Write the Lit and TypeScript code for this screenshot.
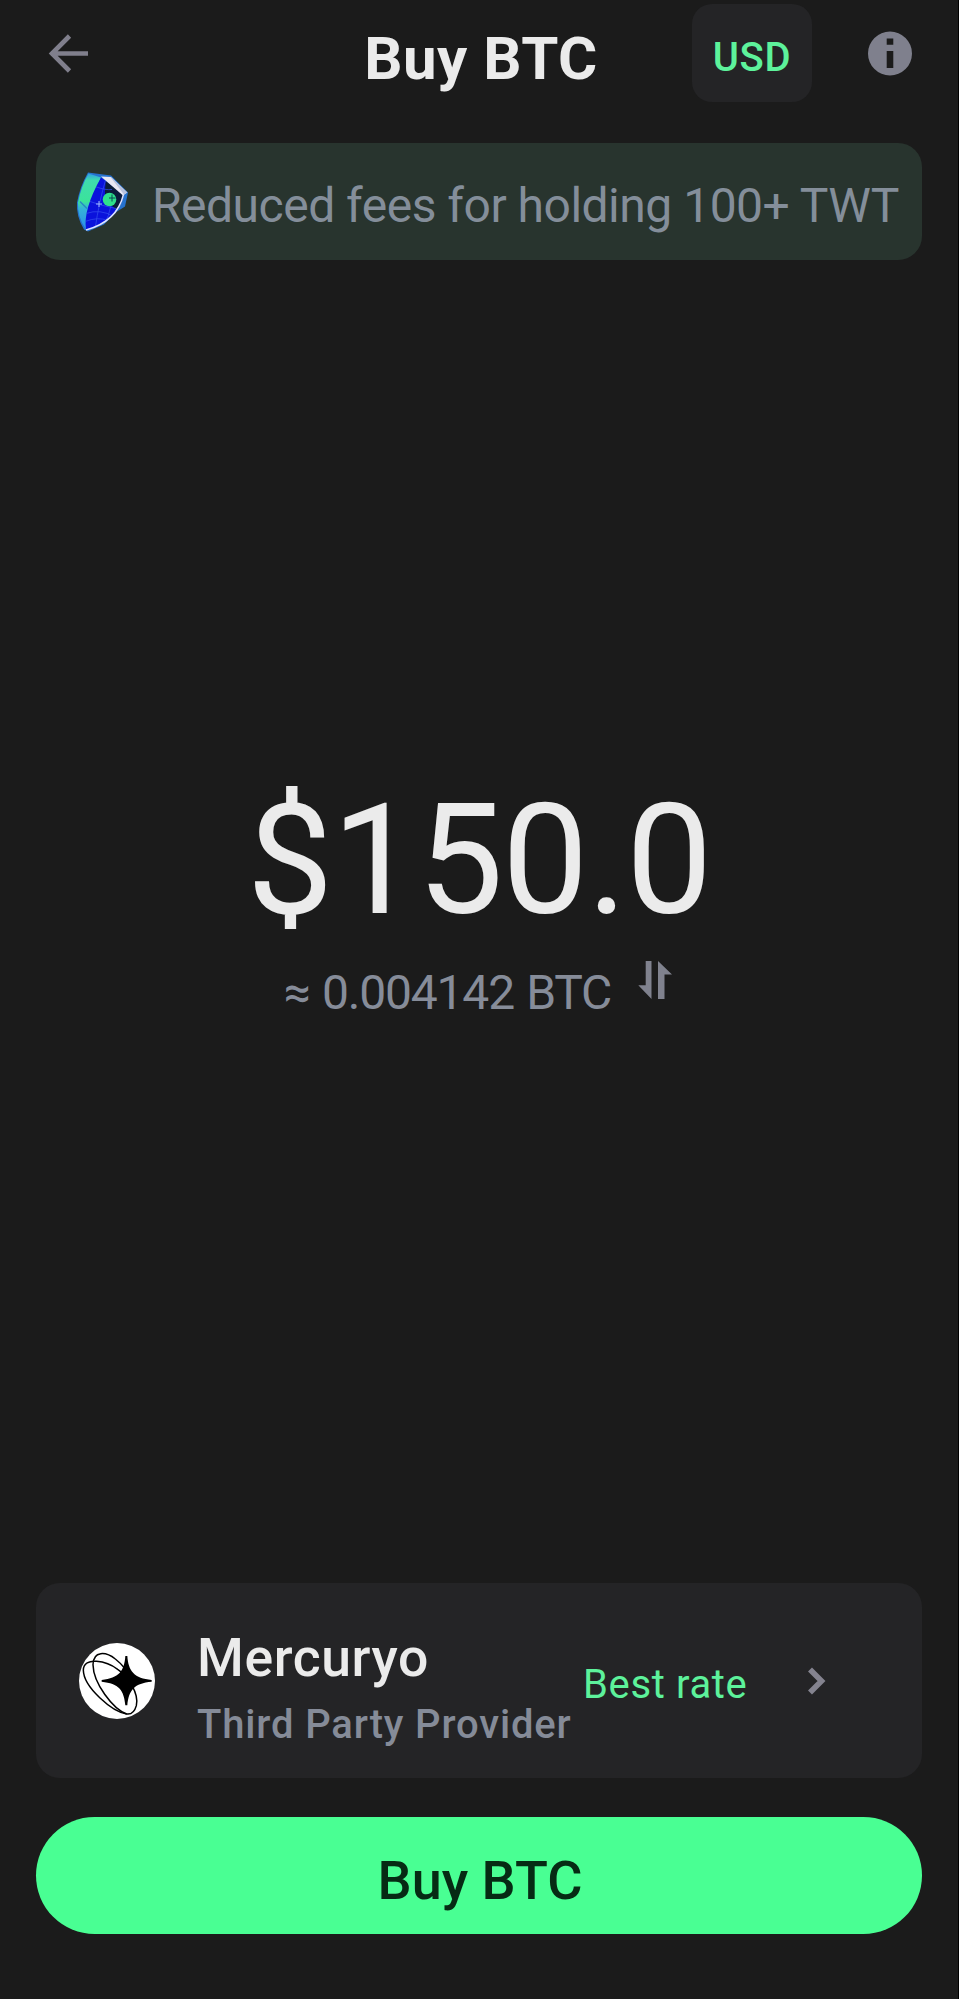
import { LitElement, html, css } from "lit";
import { customElement, property } from "lit/decorators.js";

@customElement("twt-shield")
class TwtShield extends LitElement {
  static styles = css`
    :host { display: block; width: 56px; height: 64px; }
    svg { display: block; }
  `;
  render() {
    return html`
      <svg width="56" height="64" viewBox="74 169.500 56 64">
        <defs>
          <linearGradient id="side" x1="0" y1="0" x2="0" y2="1">
            <stop offset="0" stop-color="#2f9fe6" />
            <stop offset="0.12" stop-color="#3fdcae" />
            <stop offset="0.5" stop-color="#3be39a" />
            <stop offset="0.62" stop-color="#35b4d8" />
            <stop offset="1" stop-color="#2b8fe8" />
          </linearGradient>
          <clipPath id="face">
            <path d="M101 177 L124 194 Q117 222 86 229 Q83 209 101 177 Z" />
          </clipPath>
        </defs>
        <path d="M88 172 L111 175 L128 192 L125 206 L117 211 L104 224 L88 231 L84 229 Q76 216 77 202 Q80 186 88 172 Z" fill="#2672cf" />
        <path d="M88.500 173 L101 177 Q88 203 86 229 Q77 216 78 202 Q81 186 88.500 173 Z" fill="url(#side)" />
        <path d="M80 201 L87 208" stroke="#2789c4" stroke-width="1.500" />
        <path d="M101 177 L124 194 Q117 222 86 229 Q83 209 101 177 Z" fill="#0a12dc" />
        <g clip-path="url(#face)">
          <path d="M106 176 L126 193 L122 208 L115 208 Q104 200 105 190 Z" fill="#0b1c3a" />
          <path d="M95 186 Q106 190 112 189 M90 201 Q101 205 116 208 M86 213 Q100 208 114 216 M85 221 Q98 216 108 220 M106 178 Q99 201 95 229 M111 205 Q109 216 104 224" fill="none" stroke="#3550ee" stroke-width="0.700" />
        </g>
        <path d="M101 176 L111 176.500 L127 192 L123 195 Z" fill="#e9e7f3" />
        <path d="M110 176 L127.500 192 L124 194 Z" fill="#b9c2dd" />
        <path d="M123.500 194 Q117 221 86 229.500" fill="none" stroke="#dfe3ff" stroke-width="1.500" />
        <circle cx="109.500" cy="199" r="6.800" fill="#2fe08c" />
        <path d="M112 194 V201 M109 197.500 H115.500" stroke="#0b4a52" stroke-width="1" />
        <path d="M99 200.500 V206.500 M96 203.500 H102" stroke="#9fb6ff" stroke-width="1" />
      </svg>
    `;
  }
}

@customElement("mercuryo-logo")
class MercuryoLogo extends LitElement {
  static styles = css`
    :host { display: block; width: 76px; height: 76px; }
    svg { display: block; }
  `;
  render() {
    return html`
      <svg width="76" height="76" viewBox="0 0 228 228">
        <circle cx="114" cy="114" r="114" fill="#fff" />
        <g fill="none" stroke="#000" stroke-width="4.500">
          <path d="M143 213 C100 207 14 133 13 82 C13 38 84 55 116 79 C146 99 181 151 172 188 C167 206 157 215 143 213 Z" />
          <path d="M143 213 C102 198 43 121 42 65 C43 22 81 26 109 48 C121 57 130 67 139 78" />
        </g>
        <path d="M139 39 H145 C148 84 166 106 218 111 V116 C166 120 149 142 145 187 H139 C135 142 120 121 68 116 V111 C120 105 136 84 139 39 Z" fill="#000" />
      </svg>
    `;
  }
}

@customElement("app-root")
class AppRoot extends LitElement {
  @property() asset = "BTC";
  @property() currency = "USD";

  static styles = css`
    :host {
      display: flex;
      flex-direction: column;
      box-sizing: border-box;
      width: 959px;
      height: 1999px;
      padding: 0 36px;
      border-right: 1px solid #000;
      background: #1b1b1b;
      font-family: Roboto, "Liberation Sans", sans-serif;
      color: #ebebeb;
      white-space: nowrap;
      overflow: hidden;
    }
    svg { display: block; flex: none; }
    .top {
      display: grid;
      grid-template-columns: 1fr auto 1fr;
      height: 143px;
      box-sizing: border-box;
      padding-top: 4px;
      align-items: start;
    }
    .back { margin: 29px 0 0 12px; }
    .title {
      margin: 0;
      padding: 25px 0 0 4px;
      font-size: 60px;
      line-height: 60px;
      font-weight: 700;
      letter-spacing: 0.5px;
    }
    .tools { display: flex; justify-content: flex-end; align-items: flex-start; }
    .chip {
      width: 120px;
      height: 98px;
      border-radius: 20px;
      background: #242426;
      color: #5df29b;
      font-size: 40px;
      line-height: 107px;
      font-weight: 500;
      letter-spacing: 0.6px;
      text-align: center;
    }
    .info { margin: 27px 10px 0 56px; }
    .banner {
      display: flex;
      align-items: center;
      height: 117px;
      box-sizing: border-box;
      padding-left: 38px;
      border-radius: 24px;
      background: #28342e;
      color: #848e9a;
    }
    .banner-text {
      margin-left: 22px;
      padding-top: 9px;
      font-size: 48px;
      line-height: 56px;
      letter-spacing: -0.5px;
    }
    .quote {
      flex: 1;
      display: flex;
      flex-direction: column;
      align-items: center;
      padding-top: 510px;
    }
    .amount {
      margin-top: 1px;
      font-size: 154px;
      line-height: 180px;
      letter-spacing: -1.5px;
    }
    .approx {
      display: flex;
      align-items: flex-start;
      margin-top: 15px;
      margin-right: 2px;
      color: #868c99;
    }
    .approx-text {
      margin-top: -3px;
      font-size: 48px;
      line-height: 60px;
      letter-spacing: -1.2px;
      word-spacing: 1.5px;
    }
    .swap { margin: -5px 0 0 27px; }
    .provider {
      display: flex;
      align-items: center;
      height: 195px;
      box-sizing: border-box;
      padding-left: 43px;
      border-radius: 24px;
      background: #242426;
    }
    .names { margin-left: 42px; padding-top: 15px; width: 380px; }
    .name { font-size: 53.500px; line-height: 64px; font-weight: 500; letter-spacing: 0.6px; }
    .kind {
      margin-top: 9px;
      font-size: 40px;
      line-height: 52px;
      font-weight: 500;
      letter-spacing: 0.85px;
      color: #858b98;
    }
    .rate {
      margin-left: 6px;
      padding-top: 8px;
      width: 224px;
      font-size: 40px;
      line-height: 48px;
      letter-spacing: 0.65px;
      color: #5df29b;
    }
    .buy {
      display: block;
      width: 100%;
      height: 117px;
      margin: 39px 0 65px;
      padding: 11px 0 0 2px;
      border: 0;
      border-radius: 59px;
      background: #49ff93;
      color: #062b14;
      font: 500 54px/60px Roboto, "Liberation Sans", sans-serif;
    }
  `;

  render() {
    return html`
      <header class="top">
        <svg class="back" width="42" height="42" viewBox="0 0 42 42">
          <path d="M40 20.500 H4 M21.500 3 L4 20.500 L21.500 38" fill="none" stroke="#807f8c" stroke-width="4.600" />
        </svg>
        <h1 class="title">Buy ${this.asset}</h1>
        <div class="tools">
          <div class="chip">${this.currency}</div>
          <svg class="info" width="44" height="45" viewBox="0 0 44 45">
            <circle cx="22" cy="22.500" r="22" fill="#7f808d" />
            <path d="M18.700 7.500 h6.600 v6.300 h-6.600 Z M18.700 20 h6.600 v17 h-6.600 Z" fill="#1b1b1b" />
          </svg>
        </div>
      </header>

      <section class="banner">
        <twt-shield></twt-shield>
        <span class="banner-text">Reduced fees for holding 100+ TWT</span>
      </section>

      <main class="quote">
        <div class="amount">$150.0</div>
        <div class="approx">
          <span class="approx-text">≈ 0.004142 ${this.asset}</span>
          <svg class="swap" width="34" height="38" viewBox="0 0 34 38">
            <path d="M7.700 0 H13.500 V38 L0.300 24.300 H7.700 Z M20 0 L34 13.500 H26.500 V38 H20 Z" fill="#80828e" />
          </svg>
        </div>
      </main>

      <section class="provider">
        <mercuryo-logo></mercuryo-logo>
        <div class="names">
          <div class="name">Mercuryo</div>
          <div class="kind">Third Party Provider</div>
        </div>
        <div class="rate">Best rate</div>
        <svg width="20" height="30" viewBox="0 0 20 30">
          <path d="M3 3.500 L14.500 15 L3 26.500" fill="none" stroke="#84838f" stroke-width="5.600" />
        </svg>
      </section>

      <button class="buy">Buy ${this.asset}</button>
    `;
  }
}
